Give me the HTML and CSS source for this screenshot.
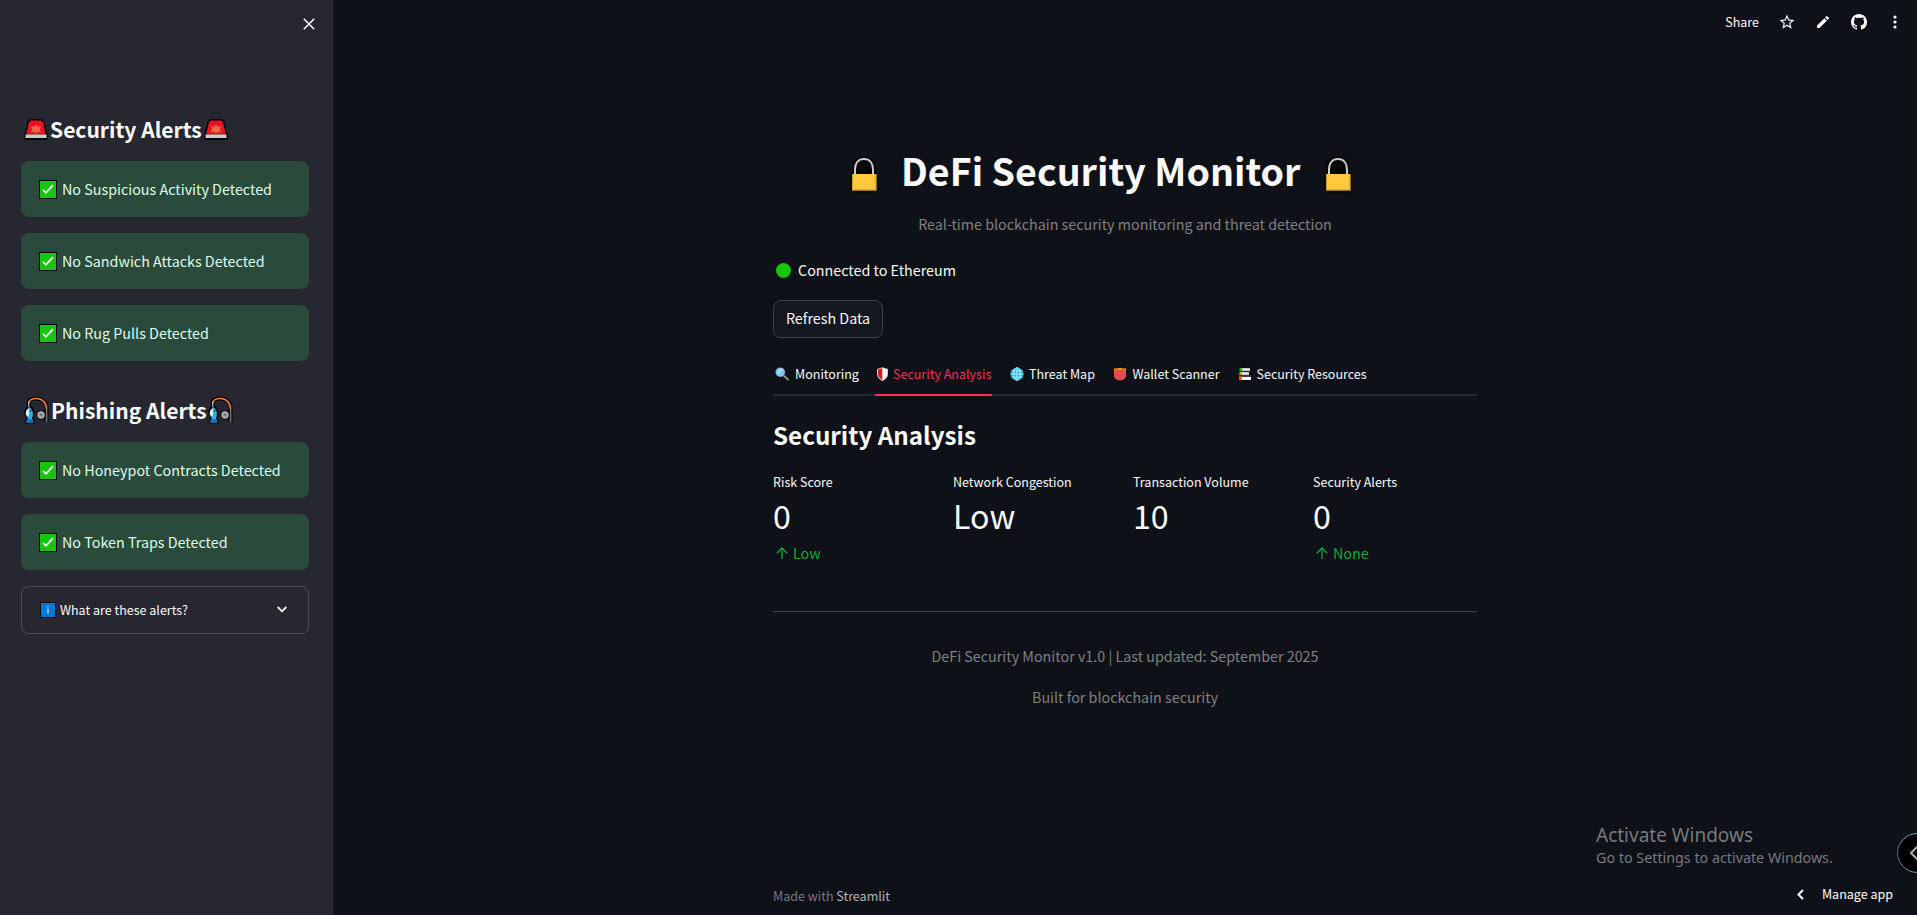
FILE: index.html
```
<!DOCTYPE html>
<html lang="en">
<head>
<meta charset="utf-8">
<title>DeFi Security Monitor</title>
<link rel="stylesheet" href="styles.css">
</head>
<body>
<svg class="sprite" aria-hidden="true">
  <symbol id="siren" viewBox="0 0 24 21">
    <path d="M6 0h12l2.300 2 3.200 13.500.4 4-1.200 1.500H1.300L.1 19.500l.4-4L3.700 2z" fill="#050505"/>
    <path d="M7 1.500h10l2 1.500 2.800 12.500H2.200L5 3z" fill="#e81224"/>
    <path d="M12 5.500l1.800 2.300 3.200-.6-1.200 3 1.200 3-3.200-.4-1.800 2-1.800-2-3.200.4 1.200-3-1.200-3 3.200.6z" fill="#f0654c"/>
    <rect x="1.500" y="15.500" width="21" height="3.500" fill="#ccc"/>
  </symbol>
  <symbol id="rod" viewBox="0 0 25 28">
    <path d="M4.800 12V6.500C4.800 3.500 8 2.500 12 2.500c6 0 10.500 3.500 10.500 10V26" fill="none" stroke="#050505" stroke-width="4"/>
    <path d="M4 10c-3 2-4 5-3.500 8 .3 2 1.500 3 2 4L.500 27.500h10.500l-1.200-4.500c2-5 1-10-1.800-12.500z" fill="#050505"/>
    <circle cx="17" cy="19" r="4.800" fill="#050505"/>
    <path d="M4.800 7.500c0-3.500 3-5 7.500-5 6 0 10.200 4 10.200 10.500" fill="none" stroke="#f7773b" stroke-width="1.600"/>
    <path d="M4.800 5.500v6" stroke="#ddd" stroke-width="1"/>
    <path d="M22.600 12.500v13.500" stroke="#777" stroke-width="1.500"/>
    <path d="M5.500 11.500c3.500 2 4.200 6.500 2.500 11l1.500 4H2l2-4.500c-3.500-3-3-8 1.500-10.500z" fill="#27b5f4"/>
    <path d="M4.800 12.300c-3.800 2.500-3.500 6.500-.6 8.700 1.300-3 .8-5.500.6-8.700z" fill="#e8f8ff"/>
    <path d="M4 23h4l1.500 3.300H2z" fill="#0078d7"/>
    <circle cx="6.500" cy="15" r=".8" fill="#111"/>
    <circle cx="17" cy="19" r="3.700" fill="#bbb"/>
    <path d="M14.500 16.500l5 5M19.500 16.500l-5 5M17 15.500v7M13.500 19h7" stroke="#666" stroke-width=".6"/>
  </symbol>
  <symbol id="check" viewBox="0 0 18 19">
    <rect width="18" height="19" fill="#050805"/>
    <rect x="1" y="1" width="16" height="17" fill="#16c60c"/>
    <path d="M4 9.800l3 3 7-7.600" fill="none" stroke="#fff" stroke-width="1.800"/>
  </symbol>
  <symbol id="lock" viewBox="0 0 28 37">
    <path d="M2 15.500C2 6 6 .5 14 .5s12 5 12 15l2 1.500v18l-1.500 1.500h-25L0 35V17z" fill="#040404"/>
    <path d="M5 18v-4.500C5 7 8.500 3 14 3s9 4 9 10.500V18" fill="none" stroke="#ccc" stroke-width="2"/>
    <rect x="2" y="18" width="24.500" height="16.500" fill="#ffc83d"/>
    <path d="M2 34h24.500M2.400 18v16.500M26 18v16.500" stroke="#b98b21" stroke-width=".9"/>
  </symbol>
</svg>
<div class="app">
  <aside class="sidebar">
    <div class="sidebar-top">
      <svg class="close" viewBox="0 0 12 12"><path d="M.8.8l10.400 10.400M11.200.8L.8 11.200" fill="none" stroke="#fafafa" stroke-width="1.600"/></svg>
    </div>
    <h2 class="side-title"><svg class="siren"><use href="#siren"/></svg><span>Security Alerts</span><svg class="siren"><use href="#siren"/></svg></h2>
    <div class="alerts">
      <div class="alert"><svg class="check"><use href="#check"/></svg>No Suspicious Activity Detected</div>
      <div class="alert"><svg class="check"><use href="#check"/></svg>No Sandwich Attacks Detected</div>
      <div class="alert"><svg class="check"><use href="#check"/></svg>No Rug Pulls Detected</div>
    </div>
    <h2 class="side-title side-title-phishing"><svg class="rod"><use href="#rod"/></svg><span>Phishing Alerts</span><svg class="rod"><use href="#rod"/></svg></h2>
    <div class="alerts">
      <div class="alert"><svg class="check"><use href="#check"/></svg>No Honeypot Contracts Detected</div>
      <div class="alert"><svg class="check"><use href="#check"/></svg>No Token Traps Detected</div>
      <div class="expander">
        <svg class="info" viewBox="0 0 16 16"><rect width="16" height="16" fill="#0b0b10"/><rect x="1" y="1" width="14" height="14" fill="#0078d7"/><path d="M8 6.500v5M8 4v1.300" stroke="#d4eaff" stroke-width="1.200"/></svg>
        <span>What are these alerts?</span>
        <svg class="chevron" viewBox="0 0 10 7"><path d="M.7 1L5 5.300 9.300 1" fill="none" stroke="#fafafa" stroke-width="1.800"/></svg>
      </div>
    </div>
  </aside>
  <main class="main">
    <header class="toolbar">
      <span class="share">Share</span>
      <svg class="tool star" viewBox="0 0 24 24"><path d="M22 9.240l-7.190-.62L12 2 9.190 8.630 2 9.240l5.460 4.730L5.820 21 12 17.270 18.180 21l-1.630-7.030L22 9.240zM12 15.400l-3.760 2.270 1-4.280-3.320-2.880 4.380-.38L12 6.100l1.710 4.040 4.380.38-3.320 2.880 1 4.280L12 15.400z"/></svg>
      <svg class="tool pencil" viewBox="0 0 24 24"><path d="M3 17.250V21h3.750L17.810 9.940l-3.750-3.750L3 17.250zM20.710 7.040a1 1 0 0 0 0-1.410l-2.340-2.340a1 1 0 0 0-1.410 0l-1.830 1.830 3.750 3.750 1.830-1.830z"/></svg>
      <svg class="tool github" viewBox="0 0 16 16"><path d="M8 0C3.580 0 0 3.580 0 8c0 3.540 2.290 6.530 5.470 7.590.4.070.55-.17.55-.38 0-.19-.01-.82-.01-1.490-2.010.37-2.530-.49-2.690-.94-.09-.23-.48-.94-.82-1.130-.28-.15-.68-.52-.01-.53.63-.01 1.080.58 1.230.82.72 1.210 1.870.87 2.330.66.07-.52.28-.87.51-1.070-1.780-.2-3.640-.89-3.640-3.950 0-.87.31-1.590.82-2.150-.08-.2-.36-1.020.08-2.120 0 0 .67-.21 2.200.82.64-.18 1.320-.27 2-.27s1.360.09 2 .27c1.530-1.040 2.200-.82 2.200-.82.44 1.100.16 1.920.08 2.120.51.56.82 1.270.82 2.150 0 3.070-1.870 3.750-3.650 3.950.29.25.54.73.54 1.480 0 1.070-.01 1.930-.01 2.200 0 .21.15.46.55.38A8.010 8.010 0 0 0 16 8c0-4.420-3.580-8-8-8z"/></svg>
      <svg class="tool dots" viewBox="0 0 4 14"><circle cx="2" cy="2" r="1.600"/><circle cx="2" cy="7" r="1.600"/><circle cx="2" cy="12" r="1.600"/></svg>
    </header>
    <section class="content">
      <h1 class="title"><svg class="lock"><use href="#lock"/></svg><span>DeFi Security Monitor</span><svg class="lock"><use href="#lock"/></svg></h1>
      <p class="subtitle">Real-time blockchain security monitoring and threat detection</p>
      <p class="status"><svg class="status-dot" viewBox="0 0 17 17"><circle cx="8.500" cy="8.500" r="8.300" fill="#05080a"/><circle cx="8.500" cy="8.500" r="7.500" fill="#16c60c"/></svg>Connected to Ethereum</p>
      <button class="refresh" type="button">Refresh Data</button>
      <nav class="tabs">
        <a class="tab tab-monitoring"><svg viewBox="0 0 15 15"><path d="M8.500 8.500l5.500 5" stroke="#050505" stroke-width="3.600"/><path d="M8.500 8.500l5.200 4.700" stroke="#999" stroke-width="1.800"/><circle cx="5.300" cy="5.200" r="4.800" fill="#6fa6d6"/><circle cx="5.300" cy="5.200" r="4.100" fill="#83c3f3"/><path d="M2.500 6.500l4.500-4.500" stroke="#b4defa" stroke-width="1.800"/></svg>Monitoring</a>
        <a class="tab tab-analysis active"><svg viewBox="0 0 11 14"><path d="M5.500.2L11 2v5c0 3.500-2.500 5.500-5.500 7C2.500 12.500 0 10.500 0 7V2z" fill="#c9c9c9"/><path d="M5.500 1L1 2.500V7c0 2.800 2 4.500 4.500 6z" fill="#e81224"/><path d="M5.500 1L10 2.500V7c0 2.800-2 4.500-4.500 6z" fill="#f4f4f4"/><path d="M5.500 1v12" stroke="#ddd" stroke-width=".6" stroke-dasharray="1 1"/></svg>Security Analysis</a>
        <a class="tab tab-map"><svg viewBox="0 0 14 14"><circle cx="7" cy="7" r="6.900" fill="#06202c"/><circle cx="7" cy="7" r="6.400" fill="#16b9ee"/><path d="M7 .6v12.800M.6 7h12.800M1.500 3.800h11M1.500 10.200h11" fill="none" stroke="#d6f4ff" stroke-width=".8"/><ellipse cx="7" cy="7" rx="3.300" ry="6.400" fill="none" stroke="#d6f4ff" stroke-width=".8"/></svg>Threat Map</a>
        <a class="tab tab-wallet"><svg viewBox="0 0 14 14"><path d="M.3 1l4-.3L7 0l2.700.7 4 .3v7.500c0 3-3 5.500-6.700 5.500S.3 11.500.3 8.500z" fill="#1a0d08"/><path d="M1 1.500h3L7 .7l3 .8h3V6H1z" fill="#f7a800"/><path d="M2.300 2.500h9.400l1.300 2V8.500c0 2.700-2.700 4.800-6 4.800S1 11.200 1 8.500v-4z" fill="#e74856"/></svg>Wallet Scanner</a>
        <a class="tab tab-resources"><svg viewBox="0 0 14 14"><rect width="14" height="14" fill="#050505"/><path d="M4 1.200h8v2.600H4zM3.500 5.300H11v2.400H3.500zM4 9.700h9v3.200H4z" fill="#fff"/><path d="M1.500.8H4v3.400H1.500z" fill="#16c60c"/><path d="M1.500 4.800h2.300v3.400H1.500z" fill="#ffb900"/><path d="M.5 6.300h2v2.200h-2z" fill="#0078d7"/><path d="M1 9.300h3v4H1z" fill="#f7630c"/><path d="M5 4.300h8M4 8.600h9" stroke="#555" stroke-width=".8"/></svg>Security Resources</a>
      </nav>
      <h2 class="section-title">Security Analysis</h2>
      <div class="metrics">
        <div class="metric"><span class="label">Risk Score</span><span class="value">0</span><span class="delta"><svg viewBox="0 0 12 12"><path d="M6 12V1M.8 6.200L6 1l5.200 5.200" fill="none" stroke="#09ab3b" stroke-width="1.300"/></svg>Low</span></div>
        <div class="metric"><span class="label">Network Congestion</span><span class="value">Low</span></div>
        <div class="metric"><span class="label">Transaction Volume</span><span class="value">10</span></div>
        <div class="metric"><span class="label">Security Alerts</span><span class="value">0</span><span class="delta"><svg viewBox="0 0 12 12"><path d="M6 12V1M.8 6.200L6 1l5.200 5.200" fill="none" stroke="#09ab3b" stroke-width="1.300"/></svg>None</span></div>
      </div>
      <div class="about">
        <p>DeFi Security Monitor v1.0 | Last updated: September 2025</p>
        <p>Built for blockchain security</p>
      </div>
      <footer class="made">Made with <b>Streamlit</b></footer>
    </section>
  </main>
</div>
<div class="watermark"><div class="watermark-title">Activate Windows</div><div class="watermark-text">Go to Settings to activate Windows.</div></div>
<div class="manage"><svg viewBox="0 0 7 11"><path d="M6 1L1.500 5.500 6 10" fill="none" stroke="#fff" stroke-width="2"/></svg>Manage app</div>
<svg class="edge-handle" viewBox="0 0 20 40"><defs><linearGradient id="ring" x1="0" y1="0" x2="0" y2="1"><stop offset="0" stop-color="#5fa9c4"/><stop offset=".5" stop-color="#556a72"/><stop offset="1" stop-color="#6f9aa0"/></linearGradient></defs><circle cx="20" cy="20" r="19.400" fill="#000" stroke="url(#ring)" stroke-width="1"/><path d="M20.500 13.500L14 20l6.500 6.500" fill="none" stroke="#aaa" stroke-width="2"/></svg>
</body>
</html>
```
FILE: styles.css
```
* { box-sizing: border-box; }
body {
  margin: 0;
  background: #0e1117;
  color: #fafafa;
  font-family: "Noto Sans CJK JP", sans-serif;
  font-size: 14.32px;
  line-height: 24px;
  height: 915px;
  overflow: hidden;
}
h1, h2, p { margin: 0; }
svg { display: block; flex: none; }
.sprite { position: absolute; width: 0; height: 0; }
.app { display: flex; height: 915px; }

.sidebar { width: 333px; background: #262730; padding: 0 24px 0 21px; }
.sidebar-top { display: flex; justify-content: flex-end; height: 112px; margin-right: -6px; padding-top: 18px; }
.close { width: 12px; height: 12px; }
.side-title {
  display: flex;
  align-items: center;
  height: 34px;
  padding-left: 3px;
  font-size: 21.05px;
  line-height: 34px;
  font-weight: 700;
}
.side-title span { flex: none; width: 154px; margin-left: 2px; white-space: nowrap; }
.siren { width: 24px; height: 21px; }
.side-title-phishing { margin-top: 32px; }
.side-title-phishing span { width: 157px; margin-left: 2px; }
.rod { width: 25px; height: 28px; }
.alerts { display: flex; flex-direction: column; gap: 16px; margin-top: 15px; }
.alert {
  display: flex;
  align-items: center;
  gap: 5px;
  height: 56px;
  padding-left: 18px;
  border-radius: 8px;
  background: #2a4a3b;
  color: #dffde9;
  white-space: nowrap;
}
.check { width: 18px; height: 19px; }
.expander {
  display: flex;
  align-items: center;
  height: 48px;
  padding: 0 21px 0 18px;
  border: 1px solid #4c4d56;
  border-radius: 8px;
  font-size: 12.53px;
}
.info { width: 16px; height: 16px; margin-right: 4px; }
.chevron { width: 10px; height: 7px; margin: -2px 0 0 auto; }

.main { flex: 1; }
.toolbar { display: flex; align-items: center; justify-content: flex-end; height: 44px; padding-right: 20px; font-size: 12.53px; }
.tool { fill: #fafafa; }
.share { margin-right: 19px; }
.star { width: 18px; height: 18px; margin-right: 19px; }
.pencil { width: 16px; height: 16px; margin-right: 20px; }
.github { width: 16px; height: 16px; margin-right: 26px; }
.dots { width: 4px; height: 14px; }

.content { display: flex; flex-direction: column; width: 704px; height: 871px; margin: 0 auto; padding-top: 98px; }
.title {
  display: flex;
  align-items: center;
  height: 56px;
  padding-left: 77px;
  font-size: 37.6px;
  line-height: 56px;
  font-weight: 700;
}
.title span { width: 423px; margin-left: 23px; white-space: nowrap; }
.lock { width: 28px; height: 37px; margin-top: 9px; }
.subtitle { margin-top: 14px; text-align: center; color: #808080; }
.status { display: flex; align-items: center; gap: 6px; margin-top: 22px; padding-left: 2px; }
.status-dot { width: 17px; height: 17px; }
.refresh {
  width: 110px;
  height: 38px;
  margin-top: 18px;
  padding: 0 0 2px;
  border: 1px solid #41444c;
  border-radius: 8px;
  background: #131720;
  color: #fafafa;
  font: inherit;
}
.tabs { display: flex; gap: 16px; height: 42px; margin-top: 16px; border-bottom: 2px solid #262730; font-size: 12.53px; }
.tab { display: flex; align-items: center; height: 42px; padding-bottom: 2px; white-space: nowrap; }
.tab.active { border-bottom: 2px solid #ff2e5c; padding-bottom: 0; color: #f42c59; }
.tab svg { height: 14px; width: 14px; }
.tab-monitoring { width: 86px; }
.tab-monitoring svg { width: 15px; height: 15px; margin: 0 5px 0 2px; }
.tab-analysis { width: 117px; }
.tab-analysis svg { width: 11px; margin: 0 5px 0 2px; }
.tab-map { width: 87px; }
.tab-map svg { margin: 0 5px 0 2px; }
.tab-wallet { width: 109px; }
.tab-wallet svg { margin: 0 5.500px 0 2px; }
.tab-resources svg { margin: 0 4.500px 0 2px; }

.section-title { height: 34px; margin-top: 22px; font-size: 24.2px; line-height: 34px; font-weight: 700; }
.metrics { display: grid; grid-template-columns: repeat(4, 164px); column-gap: 16px; height: 139px; margin-top: 20px; }
.metric { display: flex; flex-direction: column; }
.label { font-size: 12.53px; line-height: 20px; }
.value { margin-top: 1px; font-size: 32.2px; line-height: 44px; }
.delta { display: flex; align-items: center; gap: 5px; margin-top: 4px; padding-left: 3px; color: #09ab3b; }
.delta svg { width: 12px; height: 12px; }
.about { display: flex; flex-direction: column; gap: 17px; padding-top: 32px; border-top: 1px solid #3e4147; text-align: center; color: #808080; }
.made { margin-top: auto; padding-bottom: 7px; font-size: 12.53px; color: #77797d; }
.made b { font-weight: 400; color: #b3b4b7; }

.watermark { position: absolute; left: 1596px; top: 821px; color: #77797c; font-family: "Noto Sans", sans-serif; white-space: nowrap; }
.watermark-title { font-size: 19px; line-height: 28px; }
.watermark-text { font-size: 14.3px; line-height: 18px; }
.manage { position: absolute; right: 24px; top: 882px; display: flex; align-items: center; gap: 18px; color: #fff; font-size: 12.53px; white-space: nowrap; }
.manage svg { width: 7px; height: 11px; }
.edge-handle { position: absolute; right: 0; top: 833px; width: 20px; height: 40px; }
```
